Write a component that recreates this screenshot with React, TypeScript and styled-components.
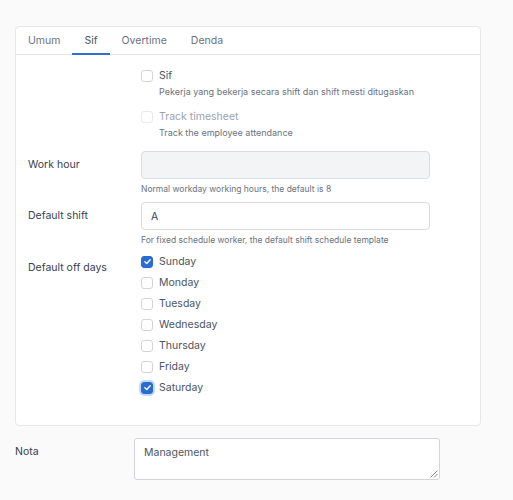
import styled, { createGlobalStyle, css } from "styled-components";

const GlobalStyle = createGlobalStyle`
    html, body {
        margin: 0;
        padding: 0;
        background: #fafafa;
        font-family: Inter, "Noto Sans", sans-serif;
        color: #374151;
    }
`

const tabs = ["Umum", "Sif", "Overtime", "Denda"];
const days = ["Sunday", "Monday", "Tuesday", "Wednesday", "Thursday", "Friday", "Saturday"];
const offDays = ["Sunday", "Saturday"];

const CheckIcon = () => (
    <svg width="9" height="9" viewBox="0 0 12 12" fill="none">
        <path d="M2.5 6.3 L5 8.6 L9.6 3.6" stroke="#fff" strokeWidth="1.9" strokeLinecap="round" strokeLinejoin="round" />
    </svg>
)

const Check = ({ label, checked = false, disabled = false, focused = false, hint }: {
    label: string; checked?: boolean; disabled?: boolean; focused?: boolean; hint?: string
}) => (
    <CheckItem>
        <CheckLine>
            <Box $checked={checked} $disabled={disabled} $focused={focused}>
                {checked && <CheckIcon />}
            </Box>
            <CheckLabel $disabled={disabled}>{label}</CheckLabel>
        </CheckLine>
        {hint && <CheckHint>{hint}</CheckHint>}
    </CheckItem>
)

const App = () => {
    return (
        <Page>
            <GlobalStyle />
            <Card>
                <TabBar>
                    {tabs.map(t => (
                        <Tab key={t} $active={t === "Sif"}>{t}</Tab>
                    ))}
                </TabBar>
                <Body>
                    <Row>
                        <Label />
                        <Control>
                            <Check label="Sif" hint="Pekerja yang bekerja secara shift dan shift mesti ditugaskan" />
                            <Spacer />
                            <Check label="Track timesheet" disabled hint="Track the employee attendance" />
                        </Control>
                    </Row>
                    <Row $top={13}>
                        <Label $pad={7}>Work hour</Label>
                        <Control>
                            <Input $disabled />
                            <Help>Normal workday working hours, the default is 8</Help>
                        </Control>
                    </Row>
                    <Row $top={7}>
                        <Label $pad={7}>Default shift</Label>
                        <Control>
                            <Input>A</Input>
                            <Help>For fixed schedule worker, the default shift schedule template</Help>
                        </Control>
                    </Row>
                    <Row $top={5}>
                        <Label $pad={10}>Default off days</Label>
                        <Control>
                            {days.map(d => (
                                <Check key={d} label={d} checked={offDays.includes(d)} focused={d === "Saturday"} />
                            ))}
                        </Control>
                    </Row>
                </Body>
            </Card>
            <NoteRow>
                <NoteLabel>Nota</NoteLabel>
                <TextArea>
                    Management
                    <Grip viewBox="0 0 10 10">
                        <path d="M9.5 2.5 L2.5 9.5 M9.5 6 L6 9.5" stroke="#666" strokeWidth="0.8" />
                    </Grip>
                </TextArea>
            </NoteRow>
        </Page>
    )
}

const Page = styled.div`
    padding: 26px 32px 20px 15px;
    min-height: 500px;
    box-sizing: border-box;
`

const Card = styled.div`
    width: 466px;
    background: #fff;
    border: 1px solid #e5e7eb;
    border-radius: 4px;
    box-sizing: border-box;
    padding-bottom: 27px;
`

const TabBar = styled.div`
    display: flex;
    height: 27px;
    border-bottom: 1px solid #e5e7eb;
`

const Tab = styled.div<{ $active?: boolean }>`
    padding: 1px 12px 0;
    display: flex;
    align-items: center;
    font-size: 10.5px;
    color: #6b7280;
    box-sizing: border-box;
    border-bottom: 2px solid transparent;
    margin-bottom: -1px;
    ${p => p.$active && css`
        color: #4b5563;
        border-bottom-color: #2f6fd0;
    `}
`

const Body = styled.div`
    padding: 10px 12px 0 12px;
`

const Row = styled.div<{ $top?: number }>`
    display: flex;
    margin-top: ${p => p.$top ?? 0}px;
`

const Label = styled.div<{ $pad?: number }>`
    width: 113px;
    flex-shrink: 0;
    font-size: 10.5px;
    line-height: 13px;
    color: #374151;
    padding-top: ${p => p.$pad ?? 0}px;
`

const Control = styled.div`
    width: 289px;
`

const Spacer = styled.div`
    height: 9px;
`

const CheckItem = styled.div`
    display: flex;
    flex-direction: column;
`

const CheckLine = styled.div`
    display: flex;
    align-items: center;
    height: 21px;
`

const Box = styled.span<{ $checked?: boolean; $disabled?: boolean; $focused?: boolean }>`
    width: 12px;
    height: 12px;
    flex-shrink: 0;
    box-sizing: border-box;
    border-radius: 3px;
    border: 1px solid #d1d5db;
    background: #fff;
    display: flex;
    align-items: center;
    justify-content: center;
    margin-right: 6px;
    ${p => p.$disabled && css`
        border-color: #e8eaed;
    `}
    ${p => p.$checked && css`
        background: #2b6cd0;
        border-color: #2b6cd0;
    `}
    ${p => p.$focused && css`
        box-shadow: 0 0 0 2px #c6d9f5;
    `}
`

const CheckLabel = styled.span<{ $disabled?: boolean }>`
    font-size: 10.5px;
    line-height: 13px;
    color: ${p => (p.$disabled ? "#9ca3af" : "#4b5563")};
`

const CheckHint = styled.div`
    font-size: 9px;
    line-height: 11px;
    color: #6b7280;
    padding-left: 18px;
    white-space: nowrap;
`

const Input = styled.div<{ $disabled?: boolean }>`
    height: 28px;
    box-sizing: border-box;
    border: 1px solid #d9dce1;
    border-radius: 4px;
    background: ${p => (p.$disabled ? "#f3f4f6" : "#fff")};
    padding: 0 9px;
    display: flex;
    align-items: center;
    font-size: 10.5px;
    color: #374151;
`

const Help = styled.div`
    font-size: 8.5px;
    line-height: 11px;
    color: #6b7280;
    margin-top: 5px;
    white-space: nowrap;
`

const NoteRow = styled.div`
    display: flex;
    margin-top: 12px;
`

const NoteLabel = styled.div`
    width: 119px;
    font-size: 10.5px;
    line-height: 13px;
    color: #374151;
    padding-top: 7px;
`

const TextArea = styled.div`
    position: relative;
    width: 306px;
    height: 42px;
    box-sizing: border-box;
    border: 1px solid #d1d5db;
    border-radius: 3px;
    background: #fff;
    padding: 7px 9px;
    font-size: 10.5px;
    line-height: 13px;
    color: #4b5563;
`

const Grip = styled.svg`
    position: absolute;
    right: 1px;
    bottom: 1px;
    width: 10px;
    height: 10px;
`

export default App;
